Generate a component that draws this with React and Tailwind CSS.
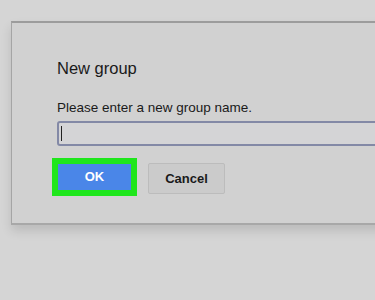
export default function App() {
  return (
    <div className="w-[375px] h-[300px] overflow-hidden bg-[#d5d5d5] pt-[21px] pl-[11px]" style={{ fontFamily: '"Liberation Sans", Arial, sans-serif' }}>
      <div className="w-[400px] h-[204px] bg-[#d1d1d1] border-t-2 border-t-[#9c9c9c] border-l border-l-[#a5a5a5] border-b-2 border-b-[#a8a8a8] shadow-[0_6px_10px_rgba(0,0,0,0.12)] pl-[45px] pt-[35px]">
        <div className="text-[16.5px] leading-[20px] text-[#1a1a1a]">New group</div>
        <div className="mt-[22px] text-[13.5px] leading-[16px] text-[#1a1a1a]">Please enter a new group name.</div>
        <div className="mt-[5px] h-[25px] w-[340px] border-2 border-[#8389a6] rounded-[3px] bg-[#d4d4d6] flex items-center pl-[2px]">
          <div className="w-px h-[15px] bg-[#222]" />
        </div>
        <div className="mt-[12px] flex items-start">
          <div className="ml-[-5px] w-[85px] h-[38px] bg-[#1fe61c] p-[6px]">
            <div className="w-full h-full bg-[#4a86e8] flex items-center justify-center text-white text-[13px] font-bold">OK</div>
          </div>
          <div className="ml-[11px] mt-[5px] w-[77px] h-[31px] bg-[#cbcbcb] border border-[#bcbcbc] rounded-[2px] flex items-center justify-center text-[13px] font-bold text-[#1a1a1a]">Cancel</div>
        </div>
      </div>
    </div>
  );
}
